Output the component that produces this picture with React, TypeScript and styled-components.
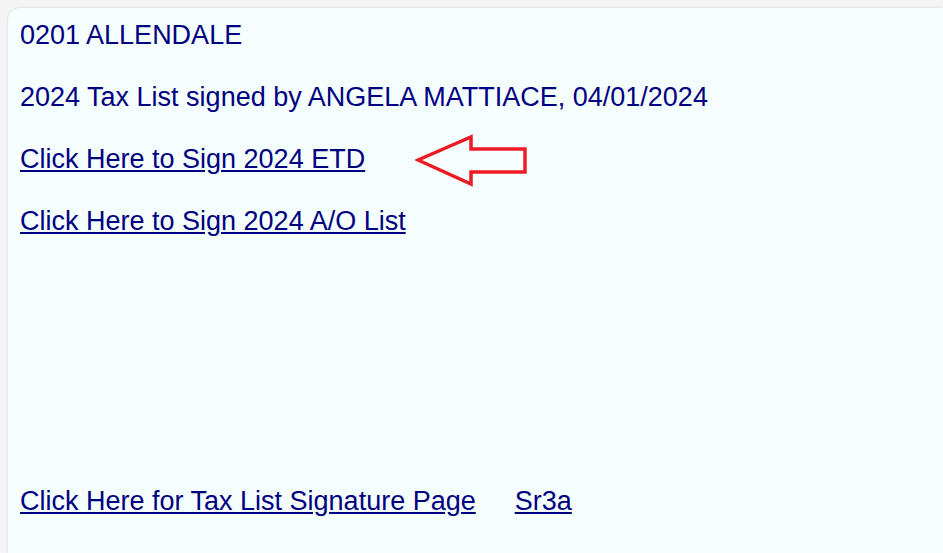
import React from "react";
import styled, { createGlobalStyle } from "styled-components";

const GlobalStyle = createGlobalStyle`
  html, body {
    margin: 0;
    background: #f5f5f5;
  }
  body {
    padding: 8px 0 0 8px;
    font-family: "Liberation Sans", Arial, sans-serif;
  }
`;

const Card = styled.div`
  background: #f5ffff;
  border-top-left-radius: 12px;
  box-shadow: 0 0 3px rgba(0, 0, 0, 0.15);
  height: 545px;
  padding: 12px 12px 0;
  box-sizing: border-box;
  color: #000080;
  font-size: 27px;
`;

const Line = styled.div<{ $gap?: number }>`
  display: flex;
  align-items: center;
  height: 31px;
  margin-bottom: ${(p) => p.$gap ?? 31}px;
  white-space: nowrap;
`;

const Link = styled.a`
  color: #000080;
  text-decoration: underline;
  text-underline-offset: 2px;
  cursor: pointer;
`;

const Spacer = styled.span<{ $w: number }>`
  display: inline-block;
  width: ${(p) => p.$w}px;
`;

const ArrowIcon = () => (
  <svg
    width="116"
    height="54"
    viewBox="0 0 116 54"
    style={{ marginLeft: 50, marginTop: 2 }}
  >
    <polygon
      points="3,26 56,3 56,15 110,15 110,38 56,38 56,50"
      fill="none"
      stroke="#ed1c24"
      strokeWidth="3.5"
      strokeLinejoin="miter"
    />
  </svg>
);

export default function App() {
  return (
    <>
      <GlobalStyle />
      <Card>
        <Line>0201 ALLENDALE</Line>
        <Line>2024 Tax List signed by ANGELA MATTIACE, 04/01/2024</Line>
        <Line>
          <Link>Click Here to Sign 2024 ETD</Link>
          <ArrowIcon />
        </Line>
        <Line $gap={249}>
          <Link>Click Here to Sign 2024 A/O List</Link>
        </Line>
        <Line>
          <Link>Click Here for Tax List Signature Page</Link>
          <Spacer $w={39} />
          <Link>Sr3a</Link>
        </Line>
      </Card>
    </>
  );
}
